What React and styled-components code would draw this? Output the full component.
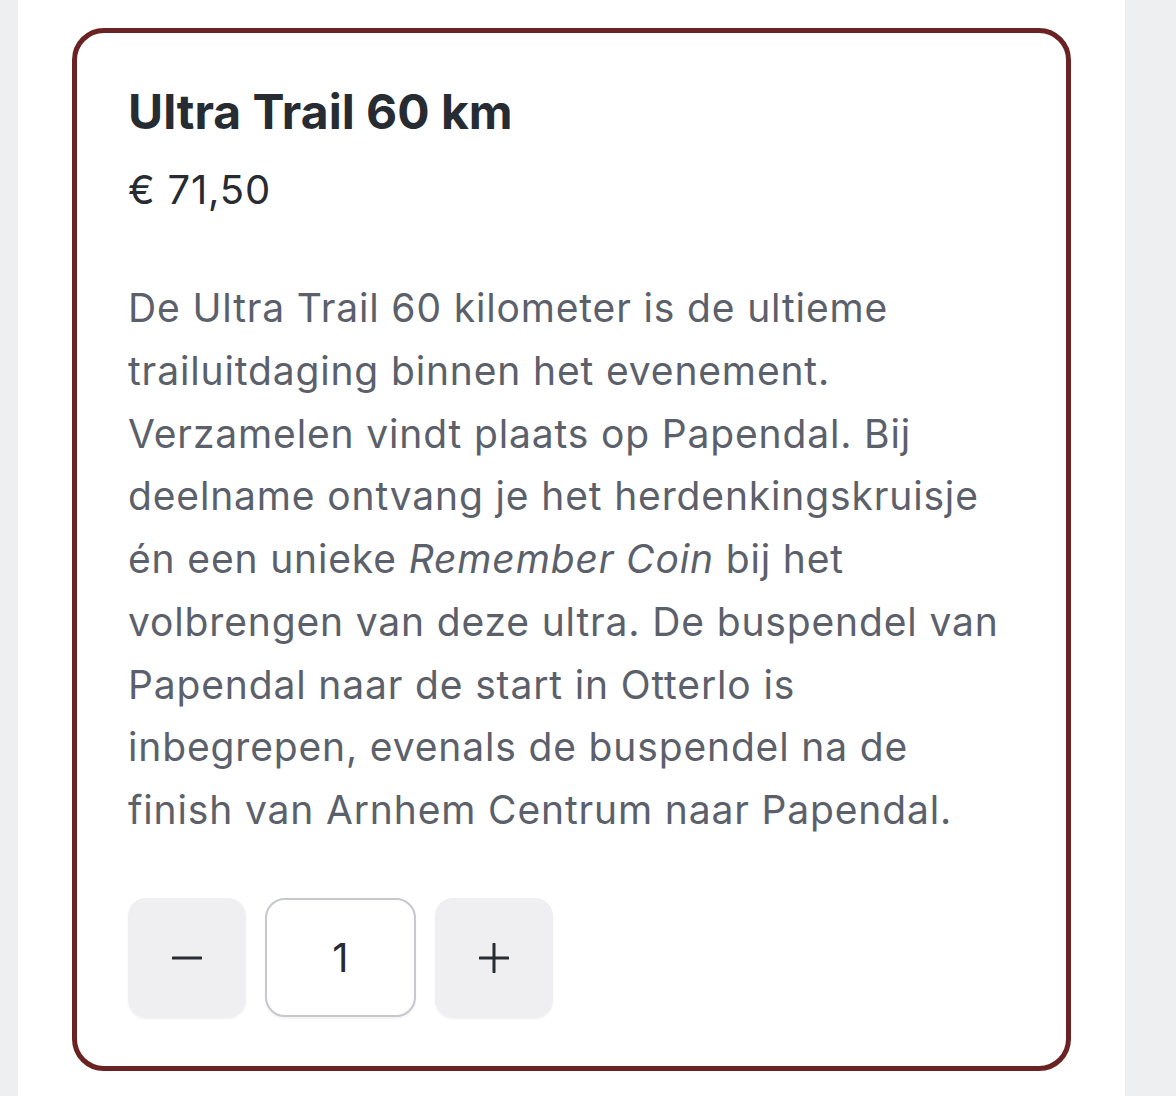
import React, { useState } from 'react';
import styled, { createGlobalStyle } from 'styled-components';

const GlobalStyle = createGlobalStyle`
  body {
    margin: 0;
    background: #eeeff1;
    font-family: 'Inter', 'Noto Sans', sans-serif;
    -webkit-font-smoothing: antialiased;
  }
`

const Page = styled.div`
  display: flex;
  min-height: 1096px;
  padding-left: 18px;
`
const Panel = styled.main`
  width: 1107px;
  background: #fff;
  padding: 28px 0 0 54px;
  box-sizing: border-box;
`
const Card = styled.section`
  width: 999px;
  height: 1043px;
  box-sizing: border-box;
  border: 5px solid #6b2222;
  border-radius: 32px;
  padding: 51px 50px 49px 51px;
  display: flex;
  flex-direction: column;
`
const Title = styled.h2`
  margin: 0;
  font-size: 48px;
  font-weight: 700;
  line-height: 56px;
  color: #272b32;
`
const Price = styled.div`
  margin-top: 26px;
  font-size: 40px;
  line-height: 48px;
  letter-spacing: 0.8px;
  color: #272b32;
`
const Description = styled.p`
  margin: 63px 0 0;
  font-size: 39px;
  line-height: 62.75px;
  letter-spacing: 0.85px;
  color: #5b606b;
  white-space: nowrap;
  em { font-style: italic; }
`
const Controls = styled.div`
  margin-top: auto;
  display: flex;
  gap: 19px;
`
const StepButton = styled.button`
  width: 118px;
  height: 119px;
  border: none;
  border-radius: 18px;
  background: #efeff1;
  box-shadow: 0 2px 2px rgba(0, 0, 0, 0.06);
  display: flex;
  align-items: center;
  justify-content: center;
  color: #272b32;
  cursor: pointer;
  padding: 0;
`
const Quantity = styled.input`
  width: 151px;
  height: 119px;
  box-sizing: border-box;
  border: 2.5px solid #c6c8ce;
  border-radius: 20px;
  background: #fff;
  box-shadow: 0 2px 2px rgba(0, 0, 0, 0.05);
  text-align: center;
  font-family: inherit;
  font-size: 40px;
  color: #272b32;
  outline: none;
`

function App() {
  const [count, setCount] = useState(1);

  return (
    <Page>
      <GlobalStyle />
      <Panel>
        <Card>
          <Title>Ultra Trail 60 km</Title>
          <Price>€ 71,50</Price>
          <Description>
            De Ultra Trail 60 kilometer is de ultieme<br />
            trailuitdaging binnen het evenement.<br />
            Verzamelen vindt plaats op Papendal. Bij<br />
            deelname ontvang je het herdenkingskruisje<br />
            én een unieke <em>Remember Coin</em> bij het<br />
            volbrengen van deze ultra. De buspendel van<br />
            Papendal naar de start in Otterlo is<br />
            inbegrepen, evenals de buspendel na de<br />
            finish van Arnhem Centrum naar Papendal.
          </Description>
          <Controls>
            <StepButton onClick={() => setCount(Math.max(0, count - 1))} aria-label="minder">
              <svg width="30" height="4" viewBox="0 0 30 4">
                <path d="M1 2h28" stroke="currentColor" strokeWidth="3" strokeLinecap="round" />
              </svg>
            </StepButton>
            <Quantity value={count} onChange={e => setCount(e.target.value)} />
            <StepButton onClick={() => setCount(Number(count) + 1)} aria-label="meer">
              <svg width="30" height="30" viewBox="0 0 30 30">
                <path d="M15 1v28M1 15h28" stroke="currentColor" strokeWidth="3" strokeLinecap="round" />
              </svg>
            </StepButton>
          </Controls>
        </Card>
      </Panel>
    </Page>
  );
}

export default App;
